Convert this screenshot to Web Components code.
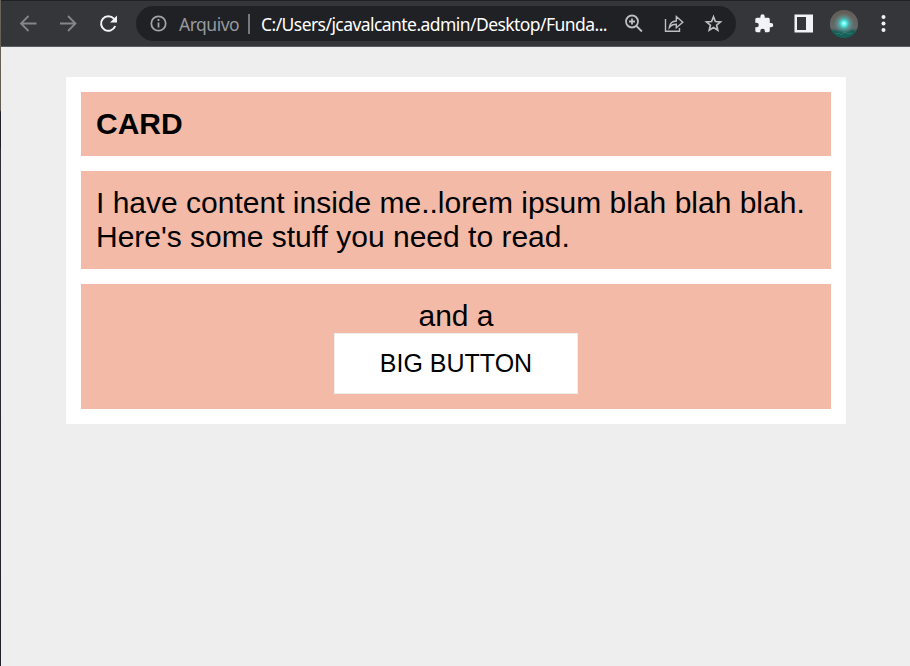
<!DOCTYPE html>
<html lang="pt-BR"><head><meta charset="utf-8"><title>Card</title>
<style>body{margin:0;background:#eee}</style></head>
<body>
<browser-window>
  <browser-toolbar slot="toolbar"></browser-toolbar>
  <content-card>
    <card-section><b>CARD</b></card-section>
    <card-section>I have content inside me..lorem ipsum blah blah blah. Here's some stuff you need to read.</card-section>
    <card-section class="center">and a<big-button>BIG BUTTON</big-button></card-section>
  </content-card>
</browser-window>
<script>
const define = (name, html) => customElements.define(name, class extends HTMLElement {
  constructor() {
    super();
    const t = document.createElement('template');
    t.innerHTML = html;
    this.attachShadow({mode: 'open'}).append(t.content.cloneNode(true));
  }
});

define('browser-window', `<style>
:host{display:grid;grid-template-columns:1px 1fr;width:100%;height:100vh;overflow:hidden;background:#eee}
.edge{background:linear-gradient(#69655a 0,#625c50 110px,#202126 112px,#202126 148px,#303136 149px,#202126 100%)}
.page{display:flex;flex-direction:column;min-width:0}
main{padding:30px 64px 0 65px}
</style><div class="edge"></div><div class="page"><slot name="toolbar"></slot><main><slot></slot></main></div>`);

define('browser-toolbar', `<style>
:host{display:flex;box-sizing:border-box;height:47px;flex:none;align-items:center;background:#35363a;border-top:1px solid #202124;border-bottom:1px solid #5b5c60;padding-left:15px}
tool-icon{margin-right:16px}
.ext{margin-left:16px}
user-avatar{margin:0 14px 0 -2px}
</style>
<tool-icon><svg viewBox="0 0 24 24" fill="none" stroke="#85868a" stroke-width="1.8"><path d="M20.5 11.5H5M12.5 4L5 11.5l7.5 7.5"/></svg></tool-icon>
<tool-icon><svg viewBox="0 0 24 24" fill="none" stroke="#85868a" stroke-width="1.8"><path d="M4 11.5h15.5M12 4l7.5 7.5L12 19"/></svg></tool-icon>
<tool-icon><svg viewBox="0 0 24 24"><path d="M19.2 14a7.3 7.3 0 1 1-1.3-7.3L19.4 8.3" fill="none" stroke="#f1f3f4" stroke-width="2"/><path d="M21 3.5v7h-7z" fill="#f1f3f4"/></svg></tool-icon>
<address-bar></address-bar>
<tool-icon class="ext"><svg viewBox="0 0 24 24"><path fill="#f1f3f4" d="M19.1 11h-1.3V7.4c0-1-.8-1.7-1.7-1.7h-3.4V4.5a2.15 2.15 0 0 0-4.3 0v1.2H5c-.9 0-1.7.8-1.7 1.7v3.3h1.2a2.3 2.3 0 0 1 0 4.6H3.3v3.3c0 1 .8 1.7 1.7 1.7h3.3v-1.2a2.3 2.3 0 0 1 4.6 0v1.2h3.2c1 0 1.7-.8 1.7-1.7v-3.3h1.3a2.15 2.15 0 0 0 0-4.3z"/></svg></tool-icon>
<tool-icon><svg viewBox="0 0 24 24"><path fill="#f1f3f4" fill-rule="evenodd" d="M2.5 2.5H21V20.5H2.5zM5 5v13h9V5z"/></svg></tool-icon>
<user-avatar></user-avatar>
<tool-icon><svg viewBox="0 0 24 24" fill="#f1f3f4"><circle cx="11.5" cy="5" r="2"/><circle cx="11.5" cy="11.5" r="2"/><circle cx="11.5" cy="18" r="2"/></svg></tool-icon>`);

define('tool-icon', `<style>:host{display:block;width:24px;height:24px;flex:none}::slotted(svg){display:block;width:24px;height:24px}</style><slot></slot>`);

define('address-bar', `<style>
:host{display:flex;box-sizing:border-box;width:600px;height:35px;flex:none;align-items:center;border-radius:18px;background:#202124;color:#fff;font:17.5px/24px "Noto Sans",sans-serif;padding-left:10px;white-space:nowrap}
.label{flex:none;width:60px;margin-left:9px;color:#969a9f;letter-spacing:-.5px}
i{flex:none;width:2px;height:20px;background:#77797d;margin:0 11px 0 9px}
.url{flex:none;width:361px;letter-spacing:-.56px}
svg{fill:none;stroke:#bdbfc2;stroke-width:1.8}
tool-icon{margin-right:16px}
.info{margin:0}
.info svg{stroke:#a0a4a8}
</style>
<tool-icon class="info"><svg viewBox="0 0 24 24"><circle cx="12.5" cy="11.5" r="7.2"/><path d="M12.5 10.5v5M12.5 7v2"/></svg></tool-icon>
<span class="label">Arquivo</span><i></i><span class="url">C:/Users/jcavalcante.admin/Desktop/Funda...</span>
<tool-icon><svg viewBox="0 0 24 24"><circle cx="10" cy="9.5" r="6"/><path d="M14.4 14l5.5 5.5M7 9.5h6M10 6.5v6" /></svg></tool-icon>
<tool-icon><svg viewBox="0 0 24 24" style="stroke-width:1.4"><path d="M3.5 7v12.3h14V16M7.3 15.5c.5-4.4 3-6.3 7-6.5V4.5l6.5 5.8-6.5 5.4v-3.4c-3.1 0-5.3.9-7 3.2z"/></svg></tool-icon>
<tool-icon><svg viewBox="0 0 24 24" style="stroke-width:1.7"><path d="M11.5 4.8l1.9 4.7 5.1.4-3.9 3.3 1.2 5-4.3-2.7-4.3 2.7 1.2-5-3.9-3.3 5.1-.4z"/></svg></tool-icon>`);

define('user-avatar', `<style>:host{display:block;width:28px;height:28px;flex:none;border-radius:50%;overflow:hidden}svg{display:block}</style>
<svg width="28" height="28" viewBox="0 0 28 28"><defs><linearGradient id="sky" x2="0" y2="1"><stop stop-color="#655c54"/><stop offset=".65" stop-color="#626a6b"/><stop offset=".78" stop-color="#285b5a"/><stop offset="1" stop-color="#143f40"/></linearGradient><radialGradient id="glow"><stop stop-color="#d5ffff"/><stop offset=".25" stop-color="#49f0e8"/><stop offset=".5" stop-color="#4fb5b2" stop-opacity=".75"/><stop offset="1" stop-color="#6b8f8d" stop-opacity="0"/></radialGradient></defs><path fill="url(#sky)" d="M0 0h28v28H0z"/><path d="M2 20l5 2 4-2 5 3 6-3 6 2v6H2z" fill="#176057"/><path d="M6 24l3-1 2 2 4-3 3 2 4-1" stroke="#2b7a70" fill="none"/><circle cx="14" cy="13.5" r="10.5" fill="url(#glow)"/></svg>`);

define('content-card', `<style>:host{display:flex;flex-direction:column;gap:15px;padding:15px;background:#fff;color:#000;font:30px/34px "Liberation Sans",Arial,sans-serif}</style><slot></slot>`);
define('card-section', `<style>:host{display:block;padding:15px;background:#f3baa8}:host(.center){display:flex;flex-direction:column;align-items:center;padding-bottom:15px}</style><slot></slot>`);
define('big-button', `<style>:host{display:block}button{display:block;box-sizing:border-box;width:244px;height:61px;border:1px solid #eee;background:#fff;color:#000;font:25px/29px "Liberation Sans",Arial,sans-serif;padding:0}</style><button><slot></slot></button>`);
</script>
</body></html>
